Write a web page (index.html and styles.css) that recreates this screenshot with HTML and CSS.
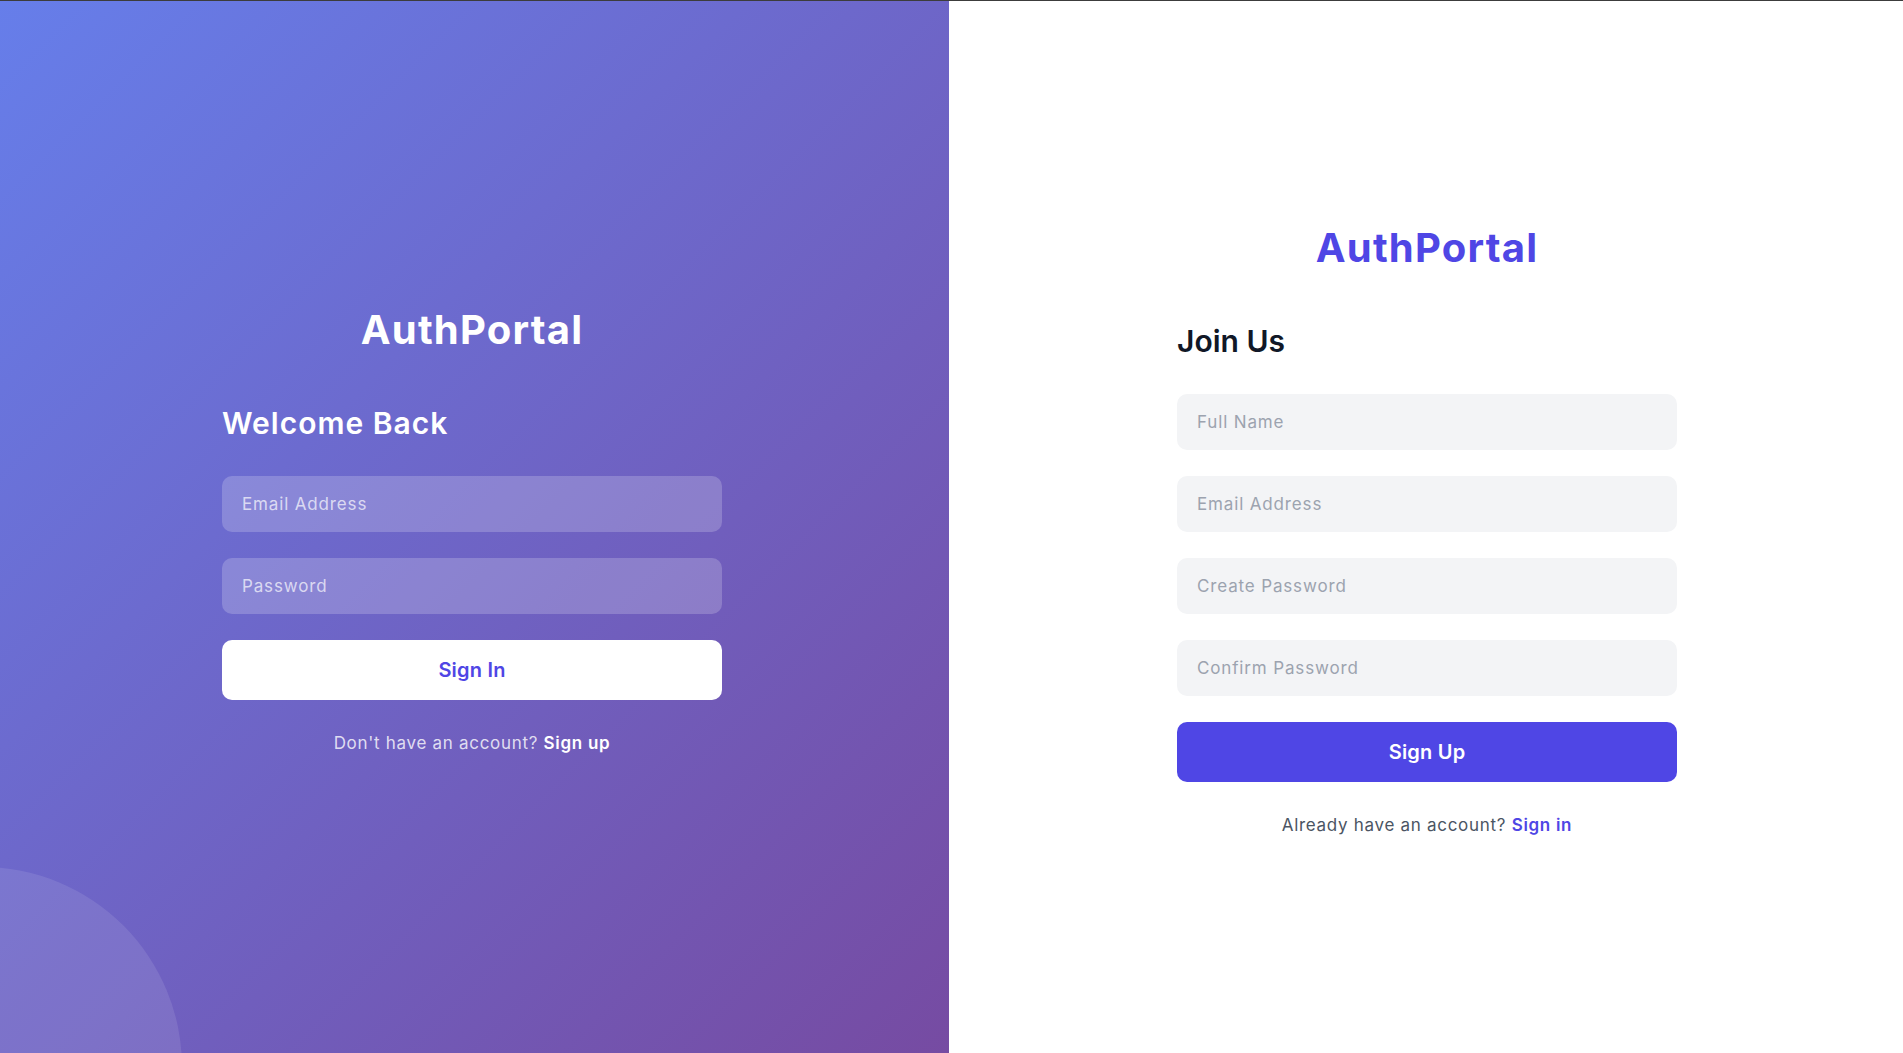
FILE: index.html
```html
<!DOCTYPE html>
<html lang="en">
<head>
<meta charset="UTF-8">
<title>AuthPortal</title>
<link rel="stylesheet" href="styles.css">
</head>
<body>
<div class="topline"></div>
<main class="auth">
  <section class="panel panel-left">
    <div class="bubble"></div>
    <form class="form">
      <h1 class="brand brand-light">AuthPortal</h1>
      <h2 class="heading heading-light">Welcome Back</h2>
      <input class="field field-light" type="email" placeholder="Email Address">
      <input class="field field-light" type="password" placeholder="Password">
      <button class="btn btn-white" type="button">Sign In</button>
      <p class="foot foot-light">Don't have an account? <a class="link link-light" href="#">Sign up</a></p>
    </form>
  </section>
  <section class="panel panel-right">
    <form class="form">
      <h1 class="brand brand-dark">AuthPortal</h1>
      <h2 class="heading heading-dark">Join Us</h2>
      <input class="field field-dark" type="text" placeholder="Full Name">
      <input class="field field-dark" type="email" placeholder="Email Address">
      <input class="field field-dark" type="password" placeholder="Create Password">
      <input class="field field-dark" type="password" placeholder="Confirm Password">
      <button class="btn btn-indigo" type="button">Sign Up</button>
      <p class="foot foot-dark">Already have an account? <a class="link link-dark" href="#">Sign in</a></p>
    </form>
  </section>
</main>
</body>
</html>
```

FILE: styles.css
```css
* {
  box-sizing: border-box;
}

html, body {
  margin: 0;
  padding: 0;
  height: 100%;
}

body {
  font-family: "Inter", "Open Sans", sans-serif;
  overflow: hidden;
}

.topline {
  position: fixed;
  top: 0;
  left: 0;
  right: 0;
  height: 1px;
  background: #3c3c3c;
  z-index: 10;
}

.auth {
  display: flex;
  height: 100vh;
}

.panel {
  flex: 1 1 0;
  display: flex;
  align-items: center;
  justify-content: center;
  position: relative;
  overflow: hidden;
  padding-top: 2px;
}

.panel-left {
  flex: 0 0 949px;
  padding-right: 5px;
  background: linear-gradient(135deg, #667eea 0%, #764ba2 100%);
}

.panel-right {
  padding-left: 2px;
  background: #ffffff;
}

.bubble {
  position: absolute;
  width: 400px;
  height: 400px;
  border-radius: 50%;
  left: -218px;
  bottom: -214px;
  background: rgba(255, 255, 255, 0.1);
}

.form {
  width: 500px;
  display: flex;
  flex-direction: column;
  position: relative;
  z-index: 1;
}

.brand {
  margin: 0 0 42px;
  font-size: 40px;
  line-height: 60px;
  font-weight: 700;
  text-align: center;
  letter-spacing: 1.2px;
}

.brand-light { color: #ffffff; }
.brand-dark { color: #4f46e5; }

.heading {
  margin: 0 0 32px;
  font-size: 30px;
  line-height: 42px;
  font-weight: 600;
}

.heading-light {
  color: #ffffff;
  letter-spacing: 1px;
}

.heading-dark {
  color: #111827;
  letter-spacing: 0;
}

.field {
  display: block;
  width: 100%;
  height: 56px;
  margin: 0 0 26px;
  padding: 0 20px;
  border: none;
  border-radius: 10px;
  font-family: inherit;
  font-size: 17px;
  letter-spacing: 0.85px;
  outline: none;
}

.field-light {
  background: rgba(255, 255, 255, 0.2);
  color: #ffffff;
}

.field-light::placeholder {
  color: rgba(255, 255, 255, 0.7);
  opacity: 1;
}

.field-dark {
  background: #f3f4f6;
  color: #111827;
}

.field-dark::placeholder {
  color: #9ca3af;
  opacity: 1;
}

.btn {
  display: block;
  width: 100%;
  height: 60px;
  border: none;
  border-radius: 10px;
  font-family: inherit;
  font-size: 20px;
  font-weight: 600;
  letter-spacing: 0.2px;
  cursor: pointer;
}

.btn-white {
  background: #ffffff;
  color: #4f46e5;
}

.btn-indigo {
  background: #4f46e5;
  color: #ffffff;
}

.foot {
  margin: 31px 0 0;
  font-size: 17px;
  line-height: 24px;
  letter-spacing: 0.7px;
  text-align: center;
}

.foot-light { color: rgba(255, 255, 255, 0.8); }
.foot-dark { color: #4b5563; }

.link {
  text-decoration: none;
  font-weight: 600;
}

.link-light { color: #ffffff; }
.link-dark { color: #4f46e5; }
```
